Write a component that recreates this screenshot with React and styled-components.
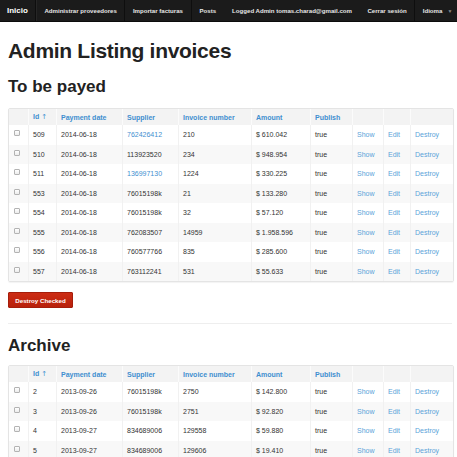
import React from "react";
import styled, { createGlobalStyle } from "styled-components";

const GlobalStyle = createGlobalStyle`
  html, body {
    margin: 0;
    padding: 0;
    overflow: hidden;
    background: #fff;
    font-family: "Liberation Sans", Arial, sans-serif;
    color: #333;
  }
`;

const NavBar = styled.div`
  display: flex;
  align-items: stretch;
  height: 22px;
  background: #1b1b1b;
  border-bottom: 1px solid #0c0c0c;
  box-sizing: border-box;
`;

const Brand = styled.a`
  display: flex;
  align-items: center;
  padding: 0 7px;
  font-size: 8px;
  font-weight: 700;
  color: #fff;
  border-right: 1px solid #0e0e0e;
  box-shadow: 1px 0 0 #262626;
  margin-right: 1px;
`;

const NavItem = styled.a`
  display: flex;
  align-items: center;
  padding: 0 ${(p) => p.$pad || "7.5px"};
  font-size: 6.1px;
  font-weight: 700;
  color: #e6e6e6;
  white-space: nowrap;
  border-right: ${(p) => (p.$divider ? "1px solid #0e0e0e" : "none")};
  border-left: ${(p) => (p.$dividerLeft ? "1px solid #0e0e0e" : "none")};
`;

const Caret = styled.span`
  margin-left: 5px;
  font-size: 5px;
  color: #8a8a8a;
`;

const Page = styled.div`
  padding: 0 5px 0 8px;
`;

const Title = styled.h1`
  margin: 16px 0 13px;
  font-size: 21px;
  line-height: 26px;
  font-weight: 700;
  letter-spacing: -0.3px;
  color: #222;
`;

const SectionTitle = styled.h2`
  margin: ${(p) => p.$top || "0"} 0 ${(p) => p.$bottom || "11px"};
  font-size: 17px;
  line-height: 20px;
  font-weight: 700;
  color: #222;
`;

const Table = styled.table`
  width: 100%;
  table-layout: fixed;
  border-collapse: separate;
  border-spacing: 0;
  border: 1px solid #e4e4e4;
  border-radius: 2px;
  box-shadow: 0 1px 1px rgba(0, 0, 0, 0.05);
  font-size: 7px;
`;

const HeadCell = styled.th`
  height: 16px;
  padding: 0 0 0 4px;
  text-align: left;
  font-weight: 700;
  color: #3f8fd0;
  background: #f3f3f3;
  border-left: 1px solid #fbfbfb;
  &:first-child {
    border-left: none;
  }
`;

const Arrow = styled.span`
  margin-left: 2px;
  font-family: "DejaVu Sans", sans-serif;
  font-weight: 400;
  color: #3f8fd0;
`;

const Row = styled.tr`
  background: ${(p) => (p.$striped ? "#f8f8f8" : "#fff")};
`;

const Cell = styled.td`
  height: 19.5px;
  padding: 0 0 0 4px;
  font-weight: 400;
  color: #333;
  white-space: nowrap;
  border-left: 1px solid #f1f1f1;
  &:first-child {
    border-left: none;
    padding-left: 5px;
  }
`;

const Link = styled.a`
  color: ${(p) => (p.$soft ? "#5aa3d9" : "#3f8fd0")};
  text-decoration: none;
  cursor: pointer;
`;

const Check = styled.input.attrs({ type: "checkbox" })`
  appearance: none;
  display: block;
  width: 6px;
  height: 6px;
  margin: -3px 0 0;
  border: 1px solid #b3b3b3;
  border-radius: 1px;
  background: linear-gradient(#fff, #ececec);
  box-sizing: border-box;
`;

const DangerButton = styled.button`
  display: block;
  margin: 10px 0 0;
  width: 65px;
  height: 16px;
  padding: 0;
  border: 1px solid #a51d0b;
  border-radius: 1px;
  background: linear-gradient(#cc2c14, #b8200b);
  color: #fff;
  font-family: inherit;
  font-size: 6.2px;
  font-weight: 700;
`;

const Rule = styled.hr`
  margin: 15px 0 0;
  border: 0;
  border-top: 1px solid #eee;
  border-bottom: 1px solid #fff;
`;

const widths = [19, 28, 66, 56, 73, 59, 42, 31, 27, 43];

const toPay = [
  ["509", "2014-06-18", "762426412", "210", "$ 610.042", true],
  ["510", "2014-06-18", "113923520", "234", "$ 948.954", false],
  ["511", "2014-06-18", "136997130", "1224", "$ 330.225", true],
  ["553", "2014-06-18", "76015198k", "21", "$ 133.280", false],
  ["554", "2014-06-18", "76015198k", "32", "$ 57.120", false],
  ["555", "2014-06-18", "762083507", "14959", "$ 1.958.596", false],
  ["556", "2014-06-18", "760577766", "835", "$ 285.600", false],
  ["557", "2014-06-18", "763112241", "531", "$ 55.633", false],
];

const archive = [
  ["2", "2013-09-26", "76015198k", "2750", "$ 142.800", false],
  ["3", "2013-09-26", "76015198k", "2751", "$ 92.820", false],
  ["4", "2013-09-27", "834689006", "129558", "$ 59.880", false],
  ["5", "2013-09-27", "834689006", "129606", "$ 19.410", false],
];

const InvoiceTable = ({ rows }) => (
  <Table>
    <colgroup>
      {widths.map((w, i) => (
        <col key={i} style={{ width: w }} />
      ))}
    </colgroup>
    <thead>
      <tr>
        <HeadCell />
        <HeadCell>
          Id<Arrow>&#8593;</Arrow>
        </HeadCell>
        <HeadCell>Payment date</HeadCell>
        <HeadCell>Supplier</HeadCell>
        <HeadCell>Invoice number</HeadCell>
        <HeadCell>Amount</HeadCell>
        <HeadCell>Publish</HeadCell>
        <HeadCell />
        <HeadCell />
        <HeadCell />
      </tr>
    </thead>
    <tbody>
      {rows.map(([id, date, supplier, number, amount, linked], i) => (
        <Row key={id} $striped={i % 2 === 1}>
          <Cell>
            <Check />
          </Cell>
          <Cell>{id}</Cell>
          <Cell>{date}</Cell>
          <Cell>{linked ? <Link>{supplier}</Link> : supplier}</Cell>
          <Cell>{number}</Cell>
          <Cell>{amount}</Cell>
          <Cell>true</Cell>
          <Cell>
            <Link $soft>Show</Link>
          </Cell>
          <Cell>
            <Link $soft>Edit</Link>
          </Cell>
          <Cell>
            <Link $soft>Destroy</Link>
          </Cell>
        </Row>
      ))}
    </tbody>
  </Table>
);

export default function App() {
  return (
    <>
      <GlobalStyle />
      <NavBar>
        <Brand>Inicio</Brand>
        <NavItem $divider>Administrar proveedores</NavItem>
        <NavItem $divider>Importar facturas</NavItem>
        <NavItem $pad="8px">Posts</NavItem>
        <NavItem $pad="8px">Logged Admin tomas.charad@gmail.com</NavItem>
        <NavItem>Cerrar sesión</NavItem>
        <NavItem $dividerLeft>
          Idioma<Caret>&#9660;</Caret>
        </NavItem>
      </NavBar>
      <Page>
        <Title>Admin Listing invoices</Title>
        <SectionTitle>To be payed</SectionTitle>
        <InvoiceTable rows={toPay} />
        <DangerButton>Destroy Checked</DangerButton>
        <Rule />
        <SectionTitle $top="11px" $bottom="9px">
          Archive
        </SectionTitle>
        <InvoiceTable rows={archive} />
      </Page>
    </>
  );
}
